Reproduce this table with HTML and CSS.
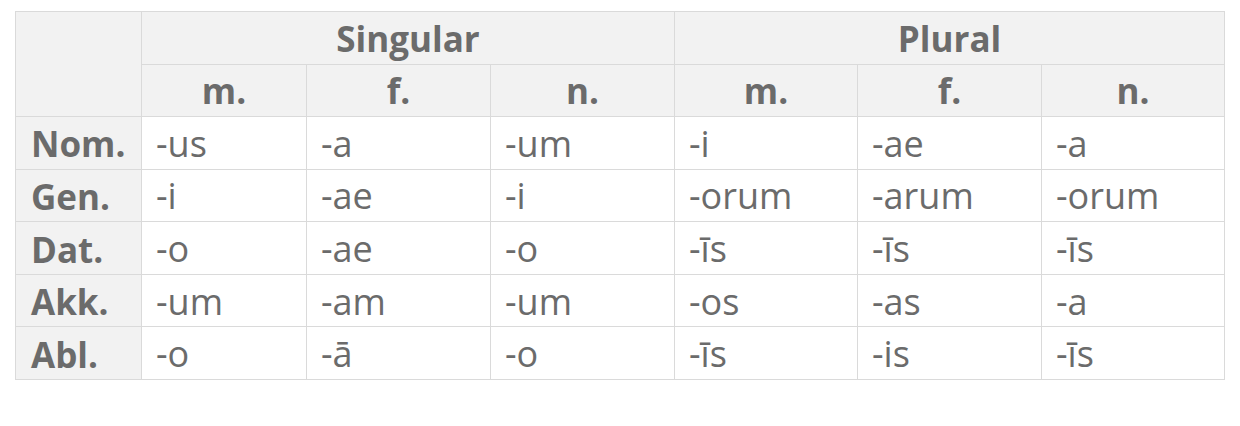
FILE: index.html
```html
<!DOCTYPE html>
<html lang="de">
<head>
<meta charset="utf-8">
<title>Deklination</title>
<link rel="stylesheet" href="styles.css">
</head>
<body>
<table class="decl">
  <colgroup>
    <col class="c-case">
    <col class="c-165"><col class="c-184"><col class="c-184">
    <col class="c-183"><col class="c-184"><col class="c-183">
  </colgroup>
  <thead>
    <tr>
      <th class="hd corner" rowspan="2"></th>
      <th class="hd" colspan="3">Singular</th>
      <th class="hd" colspan="3">Plural</th>
    </tr>
    <tr>
      <th class="hd">m.</th><th class="hd">f.</th><th class="hd">n.</th>
      <th class="hd">m.</th><th class="hd">f.</th><th class="hd">n.</th>
    </tr>
  </thead>
  <tbody>
    <tr><th class="case">Nom.</th><td>-us</td><td>-a</td><td>-um</td><td>-i</td><td>-ae</td><td>-a</td></tr>
    <tr><th class="case">Gen.</th><td>-i</td><td>-ae</td><td>-i</td><td>-orum</td><td>-arum</td><td>-orum</td></tr>
    <tr><th class="case">Dat.</th><td>-o</td><td>-ae</td><td>-o</td><td>-īs</td><td>-īs</td><td>-īs</td></tr>
    <tr><th class="case">Akk.</th><td>-um</td><td>-am</td><td>-um</td><td>-os</td><td>-as</td><td>-a</td></tr>
    <tr><th class="case">Abl.</th><td>-o</td><td>-ā</td><td>-o</td><td>-īs</td><td>-is</td><td>-īs</td></tr>
  </tbody>
</table>
</body>
</html>
```
FILE: styles.css
```css
html, body {
  margin: 0;
  padding: 0;
  background: #ffffff;
}
body {
  padding: 11px 0 0 15px;
  font-family: "Open Sans", "Liberation Sans", sans-serif;
  color: #6b6b6b;
}
.decl {
  border-collapse: collapse;
  table-layout: fixed;
  width: 1210px;
  font-size: 36px;
}
.c-case { width: 126px; }
.c-165 { width: 165px; }
.c-184 { width: 184px; }
.c-183 { width: 183px; }
.decl tr { height: 52.57px; }
.decl th, .decl td {
  border: 1px solid #dadada;
  padding: 2px 0 0 14px;
  line-height: 1;
  vertical-align: middle;
  text-align: left;
  font-weight: 400;
  white-space: nowrap;
}
.decl .hd {
  background: #f2f2f2;
  text-align: center;
  font-weight: 700;
  font-size: 35px;
  padding: 1px 0 0;
}
.decl .case {
  background: #f2f2f2;
  font-weight: 700;
  font-size: 35px;
  padding-left: 15px;
}
```
